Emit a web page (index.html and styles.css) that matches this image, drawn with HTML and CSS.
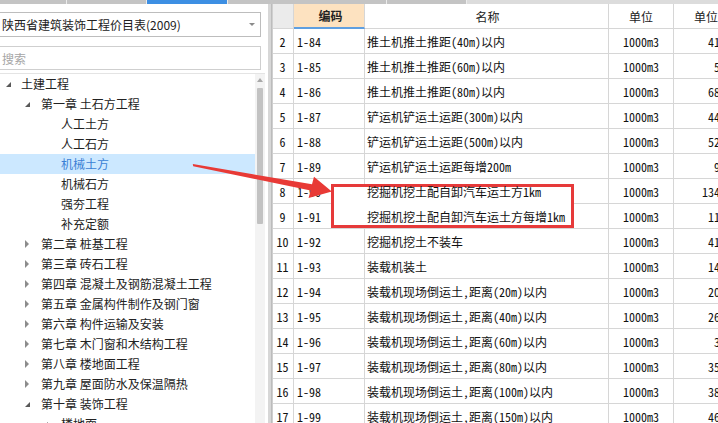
FILE: index.html
```html
<!DOCTYPE html>
<html lang="zh-CN">
<head>
<meta charset="utf-8">
<title>定额库</title>
<link rel="stylesheet" href="styles.css">
</head>
<body>
<div class="tabs">
  <span class="tab w1"></span><span class="tab w2"></span><span class="tab active"></span><span class="tab w4"></span><span class="tab w5"></span><span class="tab rest"></span>
</div>
<div class="main">
  <aside class="side">
    <div class="select"><span class="sel-text">陕西省建筑装饰工程价目表(2009)</span><i class="caret"></i></div>
    <div class="search">搜索</div>
    <div class="treebox">
      <ul class="tree">
        <li class="node l0"><i class="open"></i>土建工程</li>
        <li class="node l1"><i class="open"></i>第一章 土石方工程</li>
        <li class="node l2">人工土方</li>
        <li class="node l2">人工石方</li>
        <li class="node l2 selected">机械土方</li>
        <li class="node l2">机械石方</li>
        <li class="node l2">强夯工程</li>
        <li class="node l2">补充定额</li>
        <li class="node l1"><i class="shut"></i>第二章 桩基工程</li>
        <li class="node l1"><i class="shut"></i>第三章 砖石工程</li>
        <li class="node l1"><i class="shut"></i>第四章 混凝土及钢筋混凝土工程</li>
        <li class="node l1"><i class="shut"></i>第五章 金属构件制作及钢门窗</li>
        <li class="node l1"><i class="shut"></i>第六章 构件运输及安装</li>
        <li class="node l1"><i class="shut"></i>第七章 木门窗和木结构工程</li>
        <li class="node l1"><i class="shut"></i>第八章 楼地面工程</li>
        <li class="node l1"><i class="shut"></i>第九章 屋面防水及保温隔热</li>
        <li class="node l1"><i class="open"></i>第十章 装饰工程</li>
        <li class="node l2t"><i class="open"></i>楼地面</li>
      </ul>
      <div class="vscroll"><i class="up"></i><div class="thumb"></div></div>
    </div>
  </aside>
  <div class="split"></div>
  <section class="grid">
    <div class="row head">
      <div class="c num"></div>
      <div class="c code hl"><span class="tx">编码</span></div>
      <div class="c name hc"><span class="tx">名称</span></div>
      <div class="c unit"><span class="tx">单位</span></div>
      <div class="c price hc"><span class="tx">单位价</span></div>
    </div>
    <div class="row"><div class="c num"><span class="tx">2</span></div><div class="c code"><span class="tx">1-84</span></div><div class="c name"><span class="tx">推土机推土推距(40m)以内</span></div><div class="c unit"><span class="tx">1000m3</span></div><div class="c price"><span class="tx">4178.16</span></div></div>
    <div class="row"><div class="c num"><span class="tx">3</span></div><div class="c code"><span class="tx">1-85</span></div><div class="c name"><span class="tx">推土机推土推距(60m)以内</span></div><div class="c unit"><span class="tx">1000m3</span></div><div class="c price"><span class="tx">592.43</span></div></div>
    <div class="row"><div class="c num"><span class="tx">4</span></div><div class="c code"><span class="tx">1-86</span></div><div class="c name"><span class="tx">推土机推土推距(80m)以内</span></div><div class="c unit"><span class="tx">1000m3</span></div><div class="c price"><span class="tx">6831.70</span></div></div>
    <div class="row"><div class="c num"><span class="tx">5</span></div><div class="c code"><span class="tx">1-87</span></div><div class="c name"><span class="tx">铲运机铲运土运距(300m)以内</span></div><div class="c unit"><span class="tx">1000m3</span></div><div class="c price"><span class="tx">4427.38</span></div></div>
    <div class="row"><div class="c num"><span class="tx">6</span></div><div class="c code"><span class="tx">1-88</span></div><div class="c name"><span class="tx">铲运机铲运土运距(500m)以内</span></div><div class="c unit"><span class="tx">1000m3</span></div><div class="c price"><span class="tx">5254.12</span></div></div>
    <div class="row"><div class="c num"><span class="tx">7</span></div><div class="c code"><span class="tx">1-89</span></div><div class="c name"><span class="tx">铲运机铲运土运距每增200m</span></div><div class="c unit"><span class="tx">1000m3</span></div><div class="c price"><span class="tx">938.27</span></div></div>
    <div class="row"><div class="c num"><span class="tx">8</span></div><div class="c code"><span class="tx">1-90</span></div><div class="c name"><span class="tx">挖掘机挖土配自卸汽车运土方1km</span></div><div class="c unit"><span class="tx">1000m3</span></div><div class="c price"><span class="tx">13486.90</span></div></div>
    <div class="row"><div class="c num"><span class="tx">9</span></div><div class="c code"><span class="tx">1-91</span></div><div class="c name"><span class="tx">挖掘机挖土配自卸汽车运土方每增1km</span></div><div class="c unit"><span class="tx">1000m3</span></div><div class="c price"><span class="tx">1172.64</span></div></div>
    <div class="row"><div class="c num"><span class="tx">10</span></div><div class="c code"><span class="tx">1-92</span></div><div class="c name"><span class="tx">挖掘机挖土不装车</span></div><div class="c unit"><span class="tx">1000m3</span></div><div class="c price"><span class="tx">4103.55</span></div></div>
    <div class="row"><div class="c num"><span class="tx">11</span></div><div class="c code"><span class="tx">1-93</span></div><div class="c name"><span class="tx">装载机装土</span></div><div class="c unit"><span class="tx">1000m3</span></div><div class="c price"><span class="tx">1467.21</span></div></div>
    <div class="row"><div class="c num"><span class="tx">12</span></div><div class="c code"><span class="tx">1-94</span></div><div class="c name"><span class="tx">装载机现场倒运土,距离(20m)以内</span></div><div class="c unit"><span class="tx">1000m3</span></div><div class="c price"><span class="tx">2031.48</span></div></div>
    <div class="row"><div class="c num"><span class="tx">13</span></div><div class="c code"><span class="tx">1-95</span></div><div class="c name"><span class="tx">装载机现场倒运土,距离(40m)以内</span></div><div class="c unit"><span class="tx">1000m3</span></div><div class="c price"><span class="tx">2659.07</span></div></div>
    <div class="row"><div class="c num"><span class="tx">14</span></div><div class="c code"><span class="tx">1-96</span></div><div class="c name"><span class="tx">装载机现场倒运土,距离(60m)以内</span></div><div class="c unit"><span class="tx">1000m3</span></div><div class="c price"><span class="tx">387.92</span></div></div>
    <div class="row"><div class="c num"><span class="tx">15</span></div><div class="c code"><span class="tx">1-97</span></div><div class="c name"><span class="tx">装载机现场倒运土,距离(80m)以内</span></div><div class="c unit"><span class="tx">1000m3</span></div><div class="c price"><span class="tx">3526.14</span></div></div>
    <div class="row"><div class="c num"><span class="tx">16</span></div><div class="c code"><span class="tx">1-98</span></div><div class="c name"><span class="tx">装载机现场倒运土,距离(100m)以内</span></div><div class="c unit"><span class="tx">1000m3</span></div><div class="c price"><span class="tx">3804.66</span></div></div>
    <div class="row"><div class="c num"><span class="tx">17</span></div><div class="c code"><span class="tx">1-99</span></div><div class="c name"><span class="tx">装载机现场倒运土,距离(150m)以内</span></div><div class="c unit"><span class="tx">1000m3</span></div><div class="c price"><span class="tx">4612.39</span></div></div>
    <div class="mark"></div>
  </section>
</div>
<svg class="arrow" width="718" height="423" viewBox="0 0 718 423">
  <polygon fill="#e83a36" points="192.8,164.0 193.2,166.2 310.6,190.6 308.6,198.0 331.8,191.6 314.0,176.8 312.0,184.3"/>
</svg>
</body>
</html>
```

FILE: styles.css
```css
html, body {
  margin: 0;
  padding: 0;
  width: 718px;
  height: 423px;
  overflow: hidden;
  background: #fff;
}
body {
  font-family: "Noto Sans CJK SC", "Liberation Sans", sans-serif;
  font-size: 12px;
  color: #1e1e1e;
  position: relative;
}

/* top tab strip */
.tabs {
  display: flex;
  height: 4px;
  background: #dcdcdc;
}
.tab {
  height: 4px;
  background: #c4c4c4;
  border-right: 1px solid #ececec;
}
.w1 { width: 66px; }
.w2 { width: 79px; }
.tab.active { width: 80px; background: #3d8fe3; border-right-color: #ececec; }
.w4 { width: 158px; }
.w5 { width: 79px; }
.tab.rest { flex: 1; background: #dcdcdc; border-right: 0; }

.main {
  display: flex;
  height: 419px;
}

/* left side */
.side {
  width: 265px;
  display: flex;
  flex-direction: column;
}
.select {
  margin: 8px 4px 0 -2px;
  height: 25px;
  box-sizing: border-box;
  border: 1px solid #bdbdbd;
  display: flex;
  align-items: center;
  justify-content: space-between;
  padding: 0 5px 0 3px;
  color: #222;
}
.caret {
  width: 0;
  height: 0;
  border-left: 3px solid transparent;
  border-right: 3px solid transparent;
  border-top: 3px solid #8a8a8a;
}
.search {
  margin: 9px 4px 0 -2px;
  height: 24px;
  box-sizing: border-box;
  border: 1px solid #cfcfcf;
  display: flex;
  align-items: center;
  padding-left: 3px;
  color: #a6a6a6;
}
.treebox {
  margin-top: 3px;
  border-top: 1px solid #e4e4e4;
  flex: 1;
  display: flex;
  min-height: 0;
}
.tree {
  list-style: none;
  margin: 0;
  padding: 0;
  flex: 1;
  overflow: hidden;
}
.node, .l2t {
  height: 20px;
  line-height: 20px;
  display: flex;
  align-items: center;
  white-space: nowrap;
  color: #222;
}
.l0 { padding-left: 6px; }
.l1 { padding-left: 25px; }
.l2 { padding-left: 61px; }
.l2t { padding-left: 43px; }
.l0 .open { margin-right: 10px; }
.l1 .open { margin-right: 11px; }
.l1 .shut { margin-right: 12px; }
.l2t .open { margin-right: 13px; }
.open {
  width: 0;
  height: 0;
  border-left: 5px solid transparent;
  border-bottom: 5px solid #595959;
  margin-top: 1px;
}
.shut {
  width: 0;
  height: 0;
  border-left: 4px solid #8c8c8c;
  border-top: 4px solid transparent;
  border-bottom: 4px solid transparent;
}
.selected {
  background: #cce8ff;
  color: #3a7fd5;
}
.vscroll {
  width: 10px;
  background: #f3f3f3;
  display: flex;
  flex-direction: column;
}
.up {
  display: block;
  width: 0;
  height: 0;
  margin: 4px 0 6px 2px;
  border-left: 3px solid transparent;
  border-right: 3px solid transparent;
  border-bottom: 4px solid #a8a8a8;
}
.thumb {
  width: 6px;
  height: 136px;
  margin-left: 2px;
  background: #c2c2c2;
  border-radius: 1px;
}

.split {
  width: 7px;
  box-sizing: border-box;
  border-left: 3px solid #fff;
  background: #d7d7d7;
  border-right: 1px solid #bcbcbc;
}

/* right grid */
.grid {
  flex: 1;
  position: relative;
  overflow: hidden;
  border-left: 1px solid #cfcfcf;
  font-family: "Noto Sans Mono CJK SC", "Noto Sans CJK SC", "DejaVu Sans Mono", monospace;
}
.row {
  display: grid;
  grid-template-columns: 21px 71px 244px 65px 80px;
  height: 25px;
}
.c {
  box-sizing: border-box;
  border-right: 1px solid #d6d6d6;
  border-bottom: 1px solid #d6d6d6;
  display: flex;
  align-items: center;
  white-space: nowrap;
  overflow: hidden;
  color: #111;
}
.tx {
  position: relative;
  z-index: 2;
}
.num { justify-content: center; padding-right: 1px; }
.code { padding-left: 3px; }
.name { padding-left: 2px; }
.unit { justify-content: center; }
.price { justify-content: flex-end; padding-right: 3px; }

.head .c {
  background: #fff;
  color: #222;
  font-family: "Noto Sans CJK SC", "Liberation Sans", sans-serif;
}
.head .num { background: #ebebeb; }
.head .code {
  background: #fde2c0;
  justify-content: center;
  font-weight: bold;
  border-bottom: 2px solid #5f9fe0;
}
.head .hc { justify-content: center; }

.mark {
  position: absolute;
  left: 58px;
  top: 180px;
  width: 243px;
  height: 44px;
  box-sizing: border-box;
  border: 3px solid #e63a3a;
  background: #fff;
  z-index: 1;
}

.arrow {
  position: absolute;
  left: 0;
  top: 0;
  z-index: 5;
  pointer-events: none;
}
```
